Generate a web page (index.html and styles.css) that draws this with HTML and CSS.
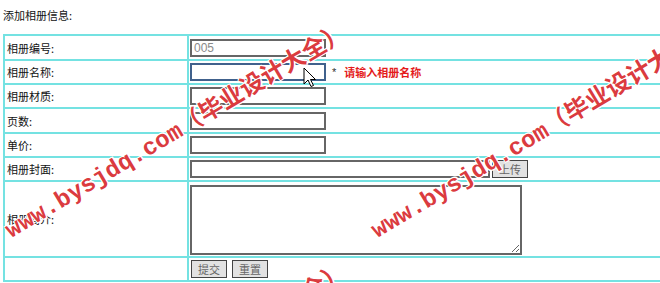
FILE: index.html
```html
<!DOCTYPE html>
<html>
  <head>
    <title>添加相册信息</title>
    <link rel="stylesheet" href="styles.css">
  </head>
  <body>
    <div class="page">
      <div class="title">添加相册信息:</div>

      <form>
	<table class="form-table">
	  <tr class="tall">
	    <td class="label">相册编号:</td>
	    <td class="field"><input type="text" class="txt readonly" value="005" readonly></td>
	  </tr>
	  <tr>
	    <td class="label">相册名称:</td>
	    <td class="field">
	      <input type="text" class="txt focused"><span class="star">*</span><span class="tip">请输入相册名称</span>
	    </td>
	  </tr>
	  <tr>
	    <td class="label">相册材质:</td>
	    <td class="field"><input type="text" class="txt"></td>
	  </tr>
	  <tr class="tall">
	    <td class="label">页数:</td>
	    <td class="field"><input type="text" class="txt"></td>
	  </tr>
	  <tr>
	    <td class="label">单价:</td>
	    <td class="field"><input type="text" class="txt"></td>
	  </tr>
	  <tr>
	    <td class="label">相册封面:</td>
	    <td class="field"><input type="text" class="txt wide"><button type="button" class="btn upload">上传</button></td>
	  </tr>
	  <tr class="memo">
	    <td class="label">相册简介:</td>
	    <td class="field"><textarea class="area"></textarea></td>
	  </tr>
	  <tr>
	    <td class="label"></td>
	    <td class="field buttons"><button type="button" class="btn">提交</button><button type="button" class="btn">重置</button></td>
	  </tr>
	</table>
      </form>

      <svg class="cursor" width="13" height="21" viewBox="0 0 13 21">
	<path d="M1 1 L1 17 L5 13 L8 19.5 L10.5 18.5 L7.5 12.5 L12.5 12.5 Z" fill="#fff" stroke="#000" stroke-width="1" stroke-linejoin="round"/>
      </svg>

      <span class="mark mark-1">www.bysjdq.com（毕业设计大全）</span>
      <span class="mark mark-2">www.bysjdq.com（毕业设计大全）</span>
      <span class="mark mark-3">www.bysjdq.com（毕业设计大全）</span>
    </div>
  </body>
</html>
```

FILE: styles.css
```css
* {
    box-sizing: border-box;
}

html, body {
    margin: 0;
    padding: 0;
    background: #fff;
    overflow: hidden;
}

.page {
    position: relative;
    width: 660px;
    height: 283px;
    overflow: hidden;
    font-family: "Noto Sans CJK SC", "Liberation Sans", sans-serif;
    font-size: 11px;
    color: #111;
}

.title {
    margin: 8px 3px 0;
    height: 14px;
    line-height: 14px;
}

form {
    margin: 0;
}

.form-table {
    margin: 12px 0 0 3px;
    width: 760px;
    border: 1px solid #74e2e2;
    border-collapse: separate;
    border-spacing: 0;
}

.form-table td {
    height: 24px;
    padding: 0;
    border: 1px solid #74e2e2;
    vertical-align: middle;
}

.form-table tr.tall td {
    height: 25px;
}

.form-table tr.memo td {
    height: 76px;
}

.form-table td.label {
    width: 184px;
    padding-left: 2px;
    line-height: 14px;
}

.form-table td.field {
    padding-left: 1px;
    font-size: 0;
}

.txt {
    width: 136px;
    height: 18px;
    margin: 0;
    padding: 0 2px;
    border: 2px solid #666;
    font: 12px "Liberation Sans", sans-serif;
    color: #000;
    vertical-align: middle;
    outline: none;
}

.txt.readonly {
    color: #8a8a8a;
}

.txt.focused {
    border-color: #40618c;
}

.txt.wide {
    width: 300px;
}

.star {
    display: inline-block;
    margin-left: 6px;
    font: 11px "Liberation Sans", sans-serif;
    color: #333;
    vertical-align: middle;
}

.tip {
    display: inline-block;
    margin-left: 8px;
    font: bold 11px "Noto Sans CJK SC", sans-serif;
    color: #e41b1b;
    vertical-align: middle;
}

.area {
    display: block;
    width: 332px;
    height: 70px;
    margin: 2px 0 0;
    border: 2px solid #666;
    resize: both;
}

.btn {
    width: 36px;
    height: 18px;
    margin: 0;
    padding: 0;
    border: 1px solid #444;
    background: #e2e2e2;
    font: 11px "Noto Sans CJK SC", sans-serif;
    color: #666;
    vertical-align: middle;
}

.btn.upload {
    margin-left: 2px;
}

.buttons .btn + .btn {
    margin-left: 5px;
}

.buttons {
    padding-top: 1px;
}

.buttons .btn:first-child {
    margin-left: 1px;
}

.cursor {
    position: absolute;
    left: 303px;
    top: 67px;
}

.mark {
    position: absolute;
    white-space: nowrap;
    font: bold 24px/24px "Liberation Mono", "Noto Sans CJK SC", monospace;
    color: rgba(214, 32, 36, 0.88);
    text-shadow: 1px 1px 0 #fff, -1px -1px 0 #fff, 1px -1px 0 #fff, -1px 1px 0 #fff;
    transform-origin: 0 50%;
    transform: rotate(-30.8deg);
    pointer-events: none;
}

.mark-1 {
    left: 8px;
    top: 221px;
}

.mark-2 {
    left: 374px;
    top: 221px;
}

.mark-3 {
    left: 8px;
    top: 461px;
}
```
